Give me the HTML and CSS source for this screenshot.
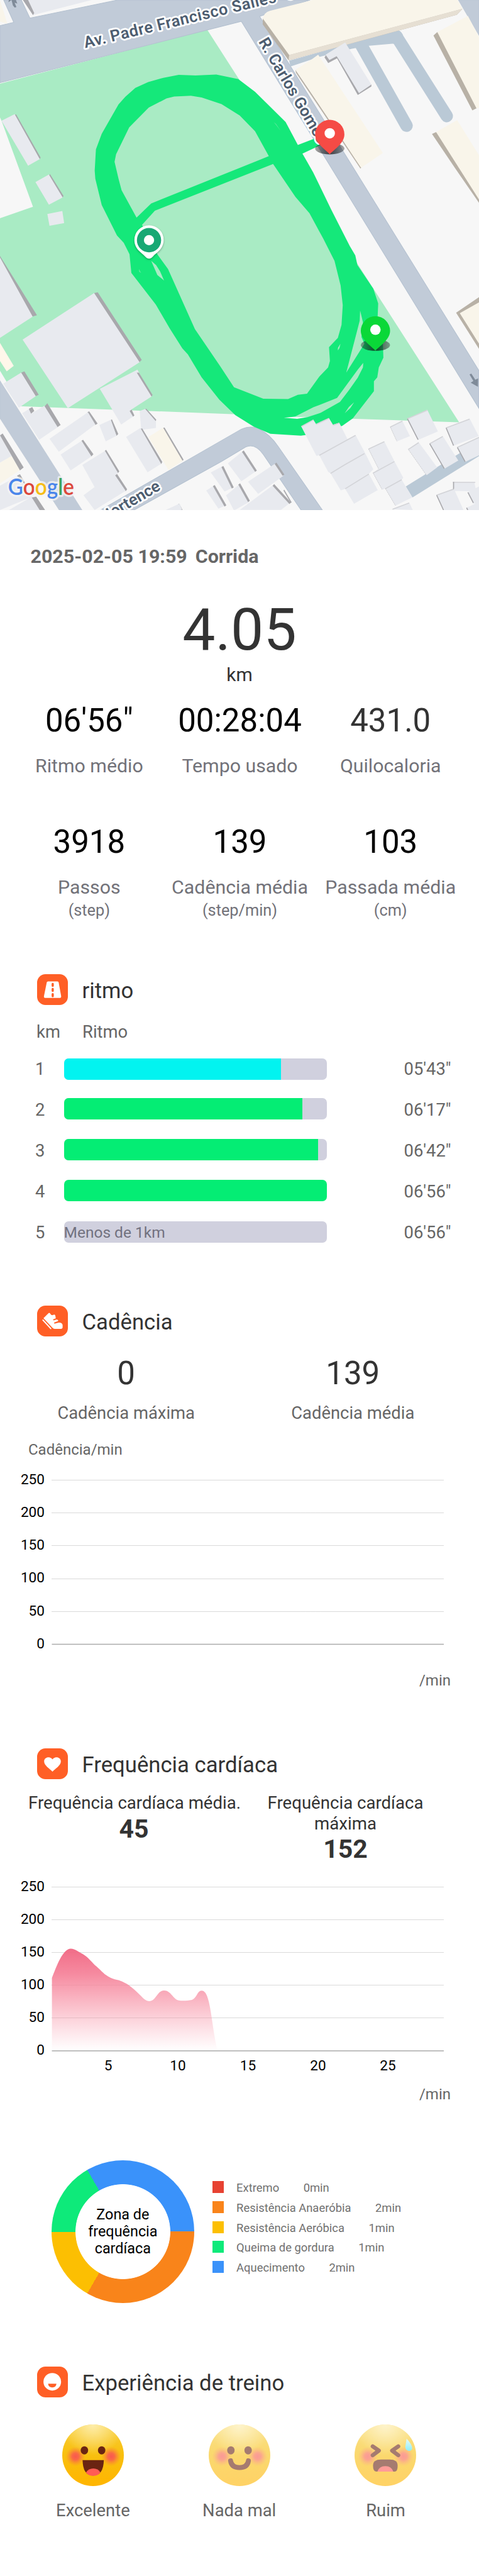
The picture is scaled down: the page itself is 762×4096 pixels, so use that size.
FILE: index.html
```html
<!DOCTYPE html>
<html lang="pt">
<head>
<meta charset="utf-8">
<title>Corrida</title>
<link rel="stylesheet" href="styles.css">
</head>
<body>
<svg class="map" viewBox="0 0 1080 1150" preserveAspectRatio="none">
  <defs>
    <linearGradient id="shade" x1="0" y1="0" x2="1" y2="0"><stop offset="0" stop-color="#111" stop-opacity=".35"/><stop offset=".5" stop-color="#111" stop-opacity=".75"/><stop offset="1" stop-color="#111" stop-opacity=".35"/></linearGradient>
    <g id="pin">
      <ellipse cx="0" cy="-13" rx="33" ry="13" fill="url(#shade)"/>
      <path d="M0 0C-6-8-33-24-33-45A33 33 0 0 1 33-45C33-24 6-8 0 0Z"/>
      <circle cx="0" cy="-47.500" r="11.700" fill="#fff"/>
    </g>
  </defs>
  <rect width="1080" height="1150" fill="#f7f7f7"/>
  <g transform="scale(.68878 .7398)">
    <path class="park" d="M0 255L678 90L1503 1287L1120 1275L760 1262L70 1238L0 1130V665L108 630L5 368L0 358Z"/>
    <path class="road" d="M0 252L790 65L1568 1245V1130L850 50L1015 0H385L98 55L70 0H12L45 68L0 78Z"/>
    <path class="road" d="M330 1554L790 1308Q825 1295 850 1308Q885 1325 910 1360L1055 1554H985L862 1385Q835 1350 805 1362L726 1406L440 1554Z"/>
    <path class="bldg" d="M75 0L108 46L300 0Z"/><path class="side" d="M75 0L108 46L112 40L92 0Z"/>
    <path class="cream" d="M0 0L24 72L0 66Z"/>
  </g>
  <g transform="scale(.33333)">
    <g transform="translate(1680 0)">
      <path class="road" d="M1420 0L1560 240V0Z"/>
      <path class="lane" d="M275 410L1010 205Q1030 205 1045 235L1020 300L975 296L805 311L700 330L480 385L285 450Z"/>
      <path class="lane-line" d="M755 290L1070 850M1000 245L1342 785"/>
      <path class="creamside" d="M98 125L97 165L272 408L1410 100L1448 60Z"/>
      <path class="creamlow" d="M276 372L272 408L1410 100L1448 60Z"/>
      <path class="cream" d="M98 125Q105 85 145 73L435 0H1415L1448 60L276 372Z"/>
      <path class="creamside" d="M318 472L322 492L758 1140L766 1130Z"/>
      <path class="cream" d="M320 470L410 415L472 370L910 1035L762 1135Z"/>
      <path class="side" d="M515 388L540 426L600 395L740 642L832 585V570L745 600L598 380L530 365Z"/>
      <path class="bldg" d="M522 370L655 287L832 572L748 630L598 380L548 406Z"/>
      <path class="creamside" d="M1252 240L1515 747L1545 732L1300 230L1278 217Z"/>
      <path class="cream" d="M1278 217L1485 107L1560 250V728L1543 733Z"/>
      <path class="creamside" d="M1242 906L1400 1140L1600 1430V1390L1300 920L1270 893Z"/>
      <path class="cream" d="M1270 893L1412 812L1560 1050V1350Z"/>
    </g>
    <g transform="translate(0 2520)">
      <path class="road" d="M0 55L555 930H400L0 310Z"/>
      <path class="side" d="M143 0L240 160L262 150L165-8ZM300 230L388 370L410 355L320 208Z"/>
      <path class="bldg" d="M22 75L143 0L242 160L128 238ZM150 275L200 245L210 278L300 225L390 370L265 455Z"/>
      <path class="side" d="M195 245L210 278L232 260L218 233Z"/>
      <path class="bldg" d="M675 110L930-20L1025 162L888 250L908 292L820 352Z"/>
      <path class="side" d="M925 0L1025 162L1032 152L940 0ZM877 260L900 298L909 290L890 250Z"/>
      <path class="side" d="M590 270L645 355L660 345L603 262ZM748 322L788 428L800 415L757 316ZM550 462L618 567L632 552L562 455ZM708 530L798 680L807 668L718 523ZM778 695L850 803L860 790L792 686Z"/>
      <path class="bldg" d="M335 448L595 268L645 352L398 535ZM672 355L750 320L788 428L715 465ZM410 555L552 462L618 567L478 662ZM557 625L710 530L798 680L778 695L850 800L640 930L565 830L640 775Z"/>
      <path class="bldg" d="M945 260L985 245L1055 325V375L955 388Z"/><path class="side" d="M982 246L1053 328L1057 318L990 245ZM950 380L1090 620L1098 605L962 378ZM1103 375L1230 600L1242 590L1113 372Z"/>
      <path class="bldg" d="M853 435L950 375L1090 618L998 675Z"/><path class="cream" d="M1003 437L1103 373L1235 597L1140 660Z"/>
      <path class="bldg" d="M0 425L78 565L0 610ZM0 765L120 700L220 840L0 930ZM60 930L215 840L275 930ZM1120 930L1205 892L1230 930Z"/>
      <path class="cream" d="M0 610L78 565L135 660L0 750Z"/>
      <path class="side" d="M0 425L135 662L160 642L18 412ZM115 697L165 755L172 750L135 688ZM215 845L268 930H305L245 840ZM1203 893L1222 930H1235L1212 886Z"/>
    </g>
    <g transform="translate(1920 1980)">
      <path class="lane" d="M825 1310L1190 1085L1320 1010V1105L870 1385Z"/>
      <path class="creamside" d="M1165 135L1320 380V30Z"/><path class="cream" d="M1190 138L1320 65V345Z"/>
    </g>
  </g>
  <g transform="scale(.68878 .7398)">
    <path class="side" d="M48 350L130 485L133 480L53 349ZM160 535L205 602L208 597L164 531ZM0 785L105 965L121 961L0 780ZM308 893L455 1105L464 1097L320 891Z"/>
    <path class="bldg" d="M5 368L48 348L130 485L92 505ZM116 555L160 532L205 602L160 624ZM155 652L204 643L210 680L162 688ZM0 785L107 965L0 1030ZM74 1035L308 893L457 1104L222 1244Z"/>
    <path d="M0 1045L45 1115L22 1132L0 1100Z" fill="#fff7ea"/>
    <path class="bldg" d="M690 1440L730 1420L765 1485L735 1498ZM746 1412L795 1375L838 1436L790 1467ZM812 1468L902 1412L928 1450L845 1505ZM675 1495L700 1480L740 1540L715 1550ZM740 1510L785 1475L815 1530L770 1554H765ZM785 1554L895 1478L953 1530L920 1554ZM545 1554L588 1535L596 1554Z"/>
    <path class="edge" d="M795 1375L838 1436M728 1422L762 1487M902 1412L928 1448M895 1478L950 1534M700 1480L738 1542M783 1475L815 1528"/>
    <path class="track" d="M585 228L640 230L708 227L780 241L835 280L935 372L975 442L1030 422L1055 440L990 468L1025 525L1085 640L1145 750L1163 778L1170 808L1222 880L1238 925L1236 970L1252 1010L1255 1090L1240 1120L1235 1150L1224 1162V1192L1155 1275L1120 1298L1000 1326L985 1328L885 1322L830 1300L770 1265L718 1218L660 1150L615 1080L597 1062L555 1000L510 928L430 832L424 775L405 740L383 718L333 625L312 545L310 520L314 455L333 408L388 318L410 295L443 268L485 250L535 237Z
      M545 300L487 328L423 388L380 470L375 493L388 545L398 580L447 663L495 620L880 476L835 400L785 352L725 317L660 297L625 292L570 294Z
      M507 642L465 685L515 775L550 820L638 1003L720 1115L766 1180L862 1215L943 1216L975 1203L1005 1200L1045 1148L1074 1120L1080 1100L1077 1058L1106 1030L1118 990L1122 930L1115 870L1095 795L1058 727L1013 650L967 600L894 500Z
      M495 795L511 808L524 827L537 855L515 838Z"/>
    <path d="M896 372L904 378L919 399ZM455 820L462 832L455 828Z" fill="#a9ebc4" opacity=".5"/>
  </g>
  <g transform="translate(640 660) scale(.33333)">
    <path class="park" d="M516 120L513 190L495 260L422 540L520 385L545 345L525 300L535 200ZM537 475L500 520L360 712L200 775L75 838L160 842L250 812L380 738L440 660L500 575L535 505ZM383 345L366 372L365 391L376 375ZM475 742L440 772L412 815L450 780Z"/>
    <path d="M75 838L0 846L90 853L160 842Z" fill="#f7f7f7"/>
    <path class="bldg" d="M118 905L200 860L218 888L305 848L332 893L375 880L430 990L485 963L550 1085L605 1195L575 1225L635 1335L475 1428L415 1328L385 1337L316 1222L300 1212L240 1100L220 1103Z"/>
    <path class="bldg" d="M573 1057L680 1007L748 1140L808 1252L797 1265L868 1385L755 1440L687 1325L665 1332L604 1220L640 1190ZM720 908L802 868L853 970L765 1005ZM834 853L970 792L1042 938L908 996ZM1096 915L1256 850L1318 970L1150 1034ZM1172 1047L1320 975V1100L1228 1143ZM985 1022L1075 970L1180 1135L1087 1190ZM842 1060L912 1012L1037 1182L965 1235ZM1143 1277L1288 1280L1302 1345L1155 1340ZM1032 1370L1150 1325L1215 1470H1085ZM1245 1350L1320 1310V1430L1280 1425ZM1235 1455L1320 1415V1470H1240ZM735 1465L848 1420L872 1470Z"/>
    <path class="seam" d="M118 905L200 860M218 890L305 850M332 897L375 882M240 1100L485 965M316 1222L410 1165L545 1088M415 1326L575 1227M573 1057L680 1007M604 1220L748 1142M687 1325L797 1265M720 908L802 868M834 853L970 795M1096 915L1256 855M1172 1047L1320 979M985 1022L1075 972M842 1060L912 1014M1143 1283H1295M1032 1370L1150 1328M735 1465L848 1422"/>
    <path class="edge" d="M836 853L908 994M1098 915L1148 1034M1174 1047L1226 1143M987 1022L1085 1190M1034 1370L1080 1470M1245 1350L1282 1422M1148 1280V1328M1236 1455L1244 1470M0 1335L50 1420"/>
    <path class="edge thin" d="M720 908L764 1004M573 1057L640 1190M604 1220L665 1332M842 1060L965 1235M687 1325L755 1440"/>
    <path d="M1256 553L1268 547L1295 588L1314 580L1313 636L1264 609L1282 597Z" fill="#7f8b99"/>
  </g>
  <path d="M33 17L29 12L26 0L19 5L21-5H34L39 8L33 6L37 16Z" fill="#7f8b99"/>
  <g class="street">
    <text transform="translate(192 108.500) rotate(-13.500)" textLength="445">Av. Padre Francisco Salles</text>
    <text transform="translate(645 0) rotate(-13.500)">O</text>
    <text transform="translate(582 94) rotate(59.500)">R. Carlos Gomes</text>
    <text transform="translate(364 1103) rotate(-30.500)" text-anchor="end">Hortence</text>
  </g>
  <text class="google" x="18" y="1116.500" textLength="149" lengthAdjust="spacingAndGlyphs"><tspan fill="#4a86ea">G</tspan><tspan fill="#dc483c">o</tspan><tspan fill="#f5bd18">o</tspan><tspan fill="#4a86ea">g</tspan><tspan fill="#3ba55c">l</tspan><tspan fill="#dc483c">e</tspan></text>
  <use href="#pin" x="743.500" y="348" fill="#f54b45"/>
  <use href="#pin" x="846.500" y="791" fill="#0ad838"/>
  <path class="start" d="M326 577C320 570 303 562 303 541A33 33 0 0 1 369 541C369 562 352 570 346 577Q336 589 326 577Z"/>
  <circle cx="336" cy="541.500" r="27.300" fill="#18a874"/><circle cx="336" cy="541.500" r="11.500" fill="#fff"/>
</svg>

<p class="date">2025-02-05 19:59<span>Corrida</span></p>
<div class="distance">4.05</div>
<div class="unit">km</div>

<div class="stats">
  <div><b class="ink">06'56"</b><span>Ritmo médio</span></div>
  <div><b class="ink">00:28:04</b><span>Tempo usado</span></div>
  <div><b>431.0</b><span>Quilocaloria</span></div>
</div>
<div class="stats second">
  <div><b class="ink">3918</b><span>Passos</span><small>(step)</small></div>
  <div><b class="ink">139</b><span>Cadência média</span><small>(step/min)</small></div>
  <div><b class="ink">103</b><span>Passada média</span><small>(cm)</small></div>
</div>

<section class="pace">
  <h2><svg class="icon" viewBox="0 0 70 70"><rect width="70" height="70" rx="19"/><path fill="#fff" d="M25 16.300H46Q48.500 16.300 49 18.500L54.700 50Q55 54 52 54H18.500Q15 54 15.600 50L22 18.500Q22.500 16.300 25 16.300Z"/><path d="M35.500 22V26.500M35.500 33.500V38M35.500 45.500V50" stroke="#ff5f26" stroke-width="5" stroke-linecap="round"/></svg>ritmo</h2>
  <div class="cols"><span>km</span><span>Ritmo</span></div>
  <div class="row first"><span>1</span><div class="bar"><i class="fast" style="width:82.600%"></i></div><em>05'43"</em></div>
  <div class="row"><span>2</span><div class="bar"><i style="width:90.700%"></i></div><em>06'17"</em></div>
  <div class="row"><span>3</span><div class="bar"><i style="width:96.700%"></i></div><em>06'42"</em></div>
  <div class="row"><span>4</span><div class="bar"><i style="width:100%"></i></div><em>06'56"</em></div>
  <div class="row last"><span>5</span><div class="bar">Menos de 1km</div><em>06'56"</em></div>
</section>

<section class="cadence">
  <h2><svg class="icon" viewBox="0 0 70 70"><rect width="70" height="70" rx="19"/><path fill="#fff" d="M14.500 28.500L26 17Q27.500 15.500 29 17L32 21Q35 22.500 39 20.500Q41 20.500 41.500 23L42.500 29L36 31.500L37.500 33.500L45 31.500L47.500 33L48 35L38.500 38.500L39.500 41L49 38.500Q57 38 58 44V50Q57.500 53 54 53H40Q37 53 35 50.500Z"/><path d="M13.500 33L31 52" stroke="#fff" stroke-width="3" stroke-linecap="round"/></svg>Cadência</h2>
  <div class="pair"><div><b>0</b><span>Cadência máxima</span></div><div><b>139</b><span>Cadência média</span></div></div>
  <p class="axis">Cadência/min</p>
  <svg class="chart" viewBox="0 2330 762 310">
    <path class="grid" d="M82.500 2353.500H706M82.500 2405.500H706M82.500 2457.500H706M82.500 2510.500H706M82.500 2562.500H706"/>
    <path class="base" d="M82.500 2614.500H706"/>
    <g class="y"><text x="71" y="2359.500">250</text><text x="71" y="2412">200</text><text x="71" y="2464">150</text><text x="71" y="2516">100</text><text x="71" y="2568.500">50</text><text x="71" y="2620.500">0</text></g>
  </svg>
  <p class="min">/min</p>
</section>

<section class="heart">
  <h2><svg class="icon" viewBox="0 0 70 70"><rect width="70" height="70" rx="19"/><path fill="#fff" d="M35 53C29 46 16 39 16 29.500C16 20 29 17 35 25C41 17 54 20 54 29.500C54 39 41 46 35 53Z"/></svg>Frequência cardíaca</h2>
  <div class="pulse"><div><span>Frequência cardíaca média.</span><b>45</b></div><div><span>Frequência cardíaca<br>máxima</span><b>152</b></div></div>
  <svg class="chart" viewBox="0 2980 762 330">
    <defs><linearGradient id="hr" x1="0" y1="0" x2="0" y2="1"><stop offset="0" stop-color="#f0627f"/><stop offset=".25" stop-color="#f58299"/><stop offset="1" stop-color="#f995a8" stop-opacity="0"/></linearGradient></defs>
    <path class="grid" d="M82.500 3000.500H706M82.500 3052.500H706M82.500 3104.500H706M82.500 3156.500H706M82.500 3208.500H706"/>
    <g transform="translate(0 2736.200) scale(.48596 .40484)"><path fill="url(#hr)" opacity=".93" d="M170 1296V1010C185 965 205 895 232 895C245 895 260 910 270 915C290 929 300 948 316 965C335 985 340 997 362 1009C375 1017 385 1015 400 1024C420 1035 430 1045 450 1067C468 1087 475 1101 490 1101C510 1101 515 1059 537 1059C560 1059 565 1092 585 1098C598 1101 615 1099 628 1096C645 1090 645 1060 660 1060C690 1060 690 1180 712 1296Z"/></g>
    <path class="base" d="M82.500 3261H706"/>
    <g class="y"><text x="71" y="3006.500">250</text><text x="71" y="3058.500">200</text><text x="71" y="3110.500">150</text><text x="71" y="3162.500">100</text><text x="71" y="3215">50</text><text x="71" y="3267">0</text></g>
    <g class="x"><text x="172" y="3292">5</text><text x="283" y="3292">10</text><text x="394.500" y="3292">15</text><text x="506" y="3292">20</text><text x="617" y="3292">25</text></g>
  </svg>
  <p class="min">/min</p>
</section>

<section class="zones">
  <div class="donut"><span>Zona de frequência cardíaca</span></div>
  <ul>
    <li><i class="z1"></i>Extremo<span>0min</span></li>
    <li><i class="z2"></i>Resistência Anaeróbia<span>2min</span></li>
    <li><i class="z3"></i>Resistência Aeróbica<span>1min</span></li>
    <li><i class="z4"></i>Queima de gordura<span>1min</span></li>
    <li><i class="z5"></i>Aquecimento<span>2min</span></li>
  </ul>
</section>

<section class="mood">
  <h2><svg class="icon" viewBox="0 0 70 70"><rect width="70" height="70" rx="19"/><circle cx="34.500" cy="34.500" r="20" fill="#fff"/><path d="M25 39H44Q43 47.500 34.500 47.500Q26 47.500 25 39Z"/></svg>Experiência de treino</h2>
  <svg width="0" height="0" class="defs"><defs>
    <linearGradient id="face" x1="0" y1="0" x2="0" y2="1"><stop offset="0" stop-color="#f8cf3c"/><stop offset=".45" stop-color="#f8c010"/><stop offset="1" stop-color="#ffb500"/></linearGradient>
    <radialGradient id="glow" cx=".5" cy="0" r=".5"><stop offset="0" stop-color="#fff3c0" stop-opacity=".85"/><stop offset="1" stop-color="#fff3c0" stop-opacity="0"/></radialGradient>
    <radialGradient id="blush"><stop offset="0" stop-color="#f9584f"/><stop offset=".35" stop-color="#f9604c" stop-opacity=".9"/><stop offset="1" stop-color="#fa8a30" stop-opacity="0"/></radialGradient>
    <linearGradient id="drop" x1="0" y1="0" x2="0" y2="1"><stop offset="0" stop-color="#d5f8f4"/><stop offset="1" stop-color="#45e4f4"/></linearGradient>
    <g id="head"><circle cx="50" cy="50" r="50" fill="url(#face)"/><circle cx="50" cy="50" r="50" fill="url(#glow)"/><circle cx="21.500" cy="52" r="16" fill="url(#blush)"/><circle cx="79.500" cy="52" r="16" fill="url(#blush)"/></g>
  </defs></svg>
  <div class="faces">
    <div><svg viewBox="0 0 100 100"><use href="#head"/><g fill="#6a2412"><ellipse cx="36" cy="42" rx="6" ry="6.600"/><ellipse cx="64" cy="42" rx="6" ry="6.600"/><path d="M33 58H67.500Q67 83 50 83Q33.500 83 33 58Z"/></g><path fill="#ff5c54" d="M38.500 78Q43 71.500 50.500 71.500Q58 71.500 62 78Q58 83.500 50 83.500Q43 83.500 38.500 78Z"/></svg><span>Excelente</span></div>
    <div><svg class="dim" viewBox="0 0 100 100"><use href="#head"/><g fill="#6a2412"><ellipse cx="36" cy="42" rx="6" ry="6.600"/><ellipse cx="64" cy="42" rx="6" ry="6.600"/></g><path class="stroke" d="M35.500 59Q37 70 50 70Q63 70 64.500 59"/></svg><span>Nada mal</span></div>
    <div><svg class="dim" viewBox="0 0 100 100"><use href="#head"/><path class="stroke thin" d="M29.500 35.500L39.500 42.500L29.500 50M71 35.500L61 42.500L71 50"/><path fill="#6a2412" d="M43 57H57Q70 57 70 67Q70 76.500 65 76.500H36Q30 76.500 30 67Q30 57 43 57Z"/><path fill="#ff5c54" d="M37 76.500Q40 67.500 50 67.500Q60 67.500 63 76.500Z"/><path fill="url(#drop)" d="M84.500 23Q94 33 93.500 39Q92 44 87 42.500Q82 41 82.500 36Z"/></svg><span>Ruim</span></div>
  </div>
</section>
</body>
</html>
```
FILE: styles.css
```css
* { box-sizing: border-box; }
body {
  margin: 0;
  width: 762px;
  height: 4096px;
  overflow: hidden;
  background: #fff;
  color: #333;
  font-family: Roboto, "Noto Sans", sans-serif;
}
p, ul, h2 { margin: 0; padding: 0; }
b, em, i { font-weight: 400; font-style: normal; }
svg { display: block; }

/* Map */
.map { width: 762px; height: 811px; }
.park { fill: #a9ebc4; }
.road { fill: #c1cbd8; stroke: #b3c0cf; stroke-width: 2; }
.lane { fill: #bac9d6; }
.lane-line { fill: none; stroke: #bac9d6; stroke-width: 84; stroke-linecap: round; }
.bldg { fill: #e8eaef; }
.side { fill: #a8a8ac; }
.cream { fill: #f9f5ea; }
.creamside { fill: #b8b1a6; }
.creamlow { fill: #e6dfd3; }
.edge { fill: none; stroke: #a8a8ac; stroke-width: 7; }
.edge.thin { stroke-width: 3; stroke-dasharray: 4 4; }
.seam { fill: none; stroke: #d3d4d8; stroke-width: 7; }
.track { fill: #15e87a; fill-rule: evenodd; }
.street text {
  font-size: 36px;
  font-weight: 600;
  fill: #4d5d70;
  stroke: #fff;
  stroke-width: 8px;
  stroke-linejoin: round;
  paint-order: stroke;
}
.google {
  font-family: Lato, sans-serif;
  font-size: 51px;
  font-weight: 600;
  stroke: rgba(245, 245, 245, .75);
  stroke-width: 9px;
  stroke-linejoin: round;
  paint-order: stroke;
}
.start { fill: #fff; filter: drop-shadow(0 2px 2px rgba(0, 0, 0, .3)); }

/* Summary */
.date {
  margin: 56px 0 0 48.5px;
  font-size: 30.4px;
  line-height: 36px;
  font-weight: 700;
  color: #666;
}
.date span { margin-left: 13px; }
.distance { margin-top: 48.5px; font-size: 93px; line-height: 100px; text-align: center; }
.unit { margin-top: 3px; font-size: 30px; line-height: 36px; text-align: center; }
.stats {
  display: grid;
  grid-template-columns: repeat(3, 239.7px);
  margin: 25.5px 0 0 22px;
  text-align: center;
  white-space: nowrap;
}
.stats.second { margin-top: 72.2px; }
.stats > div { display: flex; flex-direction: column; align-items: center; }
.stats b { font-size: 51px; line-height: 60px; }
.stats .ink { color: #000; }
.stats span { margin-top: 24.4px; font-size: 30.3px; line-height: 36px; color: #727279; }
.stats small { margin-top: 4.4px; font-size: 25.3px; line-height: 30px; color: #727279; }

/* Section headings */
h2 {
  display: flex;
  gap: 22.5px;
  height: 49px;
  margin-left: 59px;
  font-size: 34.7px;
  line-height: 52px;
  font-weight: 400;
}
.icon { width: 49px; height: 49px; fill: #ff5f26; }

/* Pace */
.pace { margin-top: 85.6px; font-size: 27.4px; color: #666; }
.pace h2, .mood h2 { color: #333; }
.cols { display: flex; margin: 26.5px 0 10px 58px; line-height: 34px; }
.cols span:first-child { width: 73px; }
.row { display: flex; height: 65px; line-height: 65px; padding-left: 56px; }
.row > span { width: 45.5px; }
.bar {
  width: 418px;
  height: 34.5px;
  margin: 12.5px 0 0;
  border-radius: 7px;
  background: #d0d0de;
  overflow: hidden;
  font-size: 24.5px;
  line-height: 35px;
  color: #727280;
}
.first .bar { margin-top: 14.5px; }
.last .bar { margin-top: 13.5px; }
.bar i { display: block; height: 100%; background: #04ed74; }
.bar .fast { background: #02f3f0; }
.row em { margin-left: 123px; }

/* Cadence */
.cadence { margin-top: 82.5px; }
.pair { display: grid; grid-template-columns: 360.6px 360.6px; margin: 29px 0 0 20.4px; text-align: center; }
.pair b { display: block; font-size: 51px; line-height: 60px; }
.pair span { display: block; margin-top: 16px; font-size: 27.4px; line-height: 34px; color: #666; }
.axis { margin: 27px 0 11px 45px; font-size: 24px; line-height: 28px; color: #666; }
.chart { width: 762px; }
.grid { stroke: #b5b5b5; stroke-dasharray: 1 1; fill: none; }
.base { stroke: #aaa; stroke-width: 1.5; }
.chart text { font-size: 22.6px; fill: #000; }
.y { text-anchor: end; }
.x { text-anchor: middle; }
.min { margin: 18px 45px 0 0; text-align: right; font-size: 24px; line-height: 28px; color: #666; }

/* Heart rate */
.heart { margin-top: 94px; }
.pulse { display: grid; grid-template-columns: 336px 336px; height: 129px; margin: 22.3px 0 0 45px; text-align: center; }
.pulse div:last-child { margin-left: 1px; }
.pulse span { display: block; font-size: 27.6px; line-height: 32.4px; white-space: nowrap; }
.pulse b { display: block; font-size: 41px; line-height: 48px; font-weight: 700; }
.heart .min { margin-top: 6px; }

/* Zones */
.zones { display: flex; margin: 90.3px 0 0 81.6px; height: 228px; }
.donut {
  display: flex;
  align-items: center;
  justify-content: center;
  width: 227.5px;
  height: 227.5px;
  border-radius: 50%;
  background: radial-gradient(circle, #fff 75px, transparent 75.8px), conic-gradient(from 90deg, #f9841a 0 120deg, #fcbf02 120deg 180deg, #0eea7a 180deg 240deg, #3a92fa 240deg);
}
.donut span { width: 120px; font-size: 23.4px; line-height: 27px; text-align: center; color: #000; }
.zones ul { list-style: none; margin: 28.5px 0 0 28.5px; }
.zones li { display: flex; align-items: center; height: 31.6px; font-size: 18.4px; color: #707070; white-space: nowrap; }
.zones i { width: 18.5px; height: 19px; margin: -2px 20px 0 0; }
.zones li span { margin-left: 38.5px; }
.z1 { background: #e74232; }
.z2 { background: #f9841a; }
.z3 { background: #fcbf02; }
.z4 { background: #0eea7a; }
.z5 { background: #3a92fa; }

/* Mood */
.mood { margin-top: 100px; }
.defs { position: absolute; }
.faces { display: grid; grid-template-columns: repeat(3, 232.8px); margin: 43px 0 0 31.5px; }
.faces > div { display: flex; flex-direction: column; align-items: center; }
.faces svg { width: 98px; height: 98px; }
.faces span { margin-top: 22.8px; font-size: 27.4px; line-height: 34px; color: #666; }
.dim { opacity: .6; }
.stroke { fill: none; stroke: #6a2412; stroke-width: 8; stroke-linecap: round; stroke-linejoin: round; }
.stroke.thin { stroke-width: 6.5; }
```
